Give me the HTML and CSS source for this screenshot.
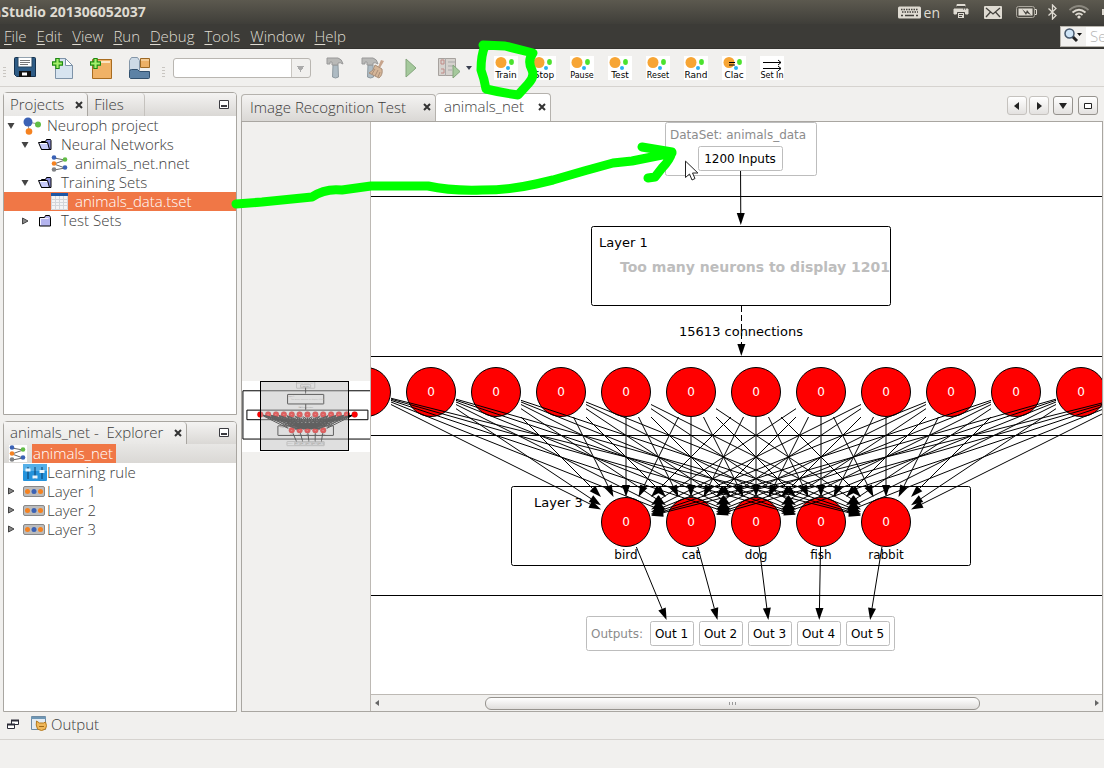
FILE: index.html
```html
<!DOCTYPE html>
<html lang="en">
<head>
<meta charset="utf-8">
<title>Neuroph Studio 201306052037</title>
<link rel="stylesheet" href="styles.css">
</head>
<body>
<svg class="defs" width="0" height="0" aria-hidden="true">
  <defs>
    <symbol id="i-min" viewBox="0 0 10 10"><path d="M0.5 0.500h9v8h-9z" fill="#fff" stroke="#3b3b40"/><path d="M2 5h6v2H2z" fill="#3b3b40"/></symbol>
    <symbol id="i-close" viewBox="0 0 8 8"><path d="M1 1l6 6M7 1L1 7" stroke="#333" stroke-width="2"/></symbol>
    <symbol id="i-open" viewBox="0 0 8 8"><path d="M0.500 1h7L4 7z" fill="#444"/></symbol>
    <symbol id="i-shut" viewBox="0 0 8 8"><path d="M1.500 1L7 4 1.500 7z" fill="#888" stroke="#444"/></symbol>
    <symbol id="i-folder-open" viewBox="0 0 16 14"><path d="M4.500 11.500V3.500h4l1-2h4l0.500 1v9z" fill="#8c90dc" stroke="#000"/><path d="M1.500 4.500h9l2 7h-8z" fill="#c8ccfa" stroke="#000"/><path d="M3 5.500h7" stroke="#fff"/></symbol>
    <symbol id="i-folder" viewBox="0 0 16 14"><path d="M2.500 12V3.500h5l1-2h4l1 2V12z" fill="#b4b4ee" stroke="#000"/><path d="M3.500 11V4.500h8" fill="none" stroke="#f2f2ff"/></symbol>
    <symbol id="i-net" viewBox="0 0 17 17"><path d="M3 3l11 2L3 9l11 4-11 2" fill="none" stroke="#666"/><circle cx="3" cy="2.500" r="2.300" fill="#3b62b5"/><circle cx="3" cy="8.500" r="2.300" fill="#f58220"/><circle cx="3" cy="14.500" r="2.300" fill="#808285"/><circle cx="14" cy="4.500" r="2.300" fill="#62bd46"/><circle cx="14" cy="12.500" r="2.300" fill="#3b62b5"/></symbol>
    <symbol id="i-layer" viewBox="0 0 22 11"><rect x="0.500" y="0.500" width="21" height="10" rx="1.500" fill="#bcbcbc" stroke="#888"/><circle cx="4.500" cy="5.500" r="2.500" fill="#f58220"/><circle cx="11" cy="5.500" r="2.500" fill="#3b62b5"/><circle cx="17.500" cy="5.500" r="2.500" fill="#f58220"/></symbol>
    <symbol id="i-dots" viewBox="0 0 24 24"><path d="M0 0h24v24H0z" fill="#fff"/><circle cx="7" cy="6.500" r="5.500" fill="#f7a534"/><ellipse cx="17.500" cy="6" rx="2.400" ry="3" fill="#4be22e"/><circle cx="14" cy="12" r="2" fill="#2bb0f2"/></symbol>
    <symbol id="i-plus" viewBox="0 0 10 10"><path d="M3.500 0.500h3v3h3v3h-3v3h-3v-3h-3v-3h3z" fill="#a6f06c" stroke="#1c8a10"/></symbol>
    <symbol id="i-hammer" viewBox="0 0 18 22"><path d="M7 8h5l0.500 12q-3 2-6 0z" fill="#aebbc3" stroke="#8f9aa0"/><path d="M1 1h11q4 1 5 6-3-2-5-1v2H6V5H4v2H1z" fill="#b9b9b7" stroke="#999"/></symbol>
  </defs>
</svg>
<div class="app">
  <header class="titlebar">
    <h1 class="title">nStudio 201306052037</h1>
    <div class="tray">
      <svg width="23" height="13" viewBox="0 0 23 13"><rect width="23" height="12" y="0.500" rx="1.500" fill="#dfdbd2"/><path d="M3 3.500h17M4 6h16" stroke="#45433e" stroke-width="1.500" stroke-dasharray="1.500 1"/><path d="M3 9.500h2M7 9.500h9M18 9.500h2" stroke="#45433e" stroke-width="1.500"/></svg>
      <span class="lang">en</span>
      <svg class="printer" width="16" height="16" viewBox="0 0 16 16"><path d="M4 3V0.500h8V3M1 5h14v5h-2.500V8h-9v2H1z" fill="#dfdbd2" stroke="#dfdbd2"/><path d="M3.500 2.500h9M10 5h1M12 5h1" stroke="#45433e"/><path d="M4.500 8.500h7v6h-7z" fill="#dfdbd2" stroke="#45433e"/><path d="M6 10.500h4M6 12.500h3" stroke="#45433e"/></svg>
      <svg class="mail" width="18" height="13" viewBox="0 0 18 13"><rect width="18" height="13" rx="1" fill="#dfdbd2"/><path d="M2 2l7 6 7-6M2 11l4.500-5M16 11l-4.500-5" fill="none" stroke="#45433e" stroke-width="1.300"/></svg>
      <svg class="battery" width="21" height="12" viewBox="0 0 21 12"><rect x="0.500" y="0.500" width="18" height="11" rx="2" fill="none" stroke="#aaa69d"/><path d="M2.500 2.500h14v7h-14z" fill="#dfdbd2"/><path d="M19 3.500h1.500v5H19" fill="none" stroke="#dfdbd2"/><path d="M6 3l4 3.500L11 4l4 5-4-2-1 2z" fill="#45433e"/></svg>
      <svg class="bt" width="9" height="16" viewBox="0 0 9 16"><path d="M0.500 4.500l7.500 7L4.500 15V1L8 4.500l-7.500 7" fill="none" stroke="#dfdbd2" stroke-width="1.300"/></svg>
      <svg class="wifi" width="20" height="14" viewBox="0 0 20 14"><path d="M0.500 5q9.500-8 19 0" fill="none" stroke="#8b887f" stroke-width="1.700"/><path d="M3.500 7.500q6.500-5.500 13 0M6.500 10q3.500-3 7 0" fill="none" stroke="#dfdbd2" stroke-width="1.800"/><circle cx="10" cy="12" r="1.600" fill="#dfdbd2"/></svg>
      <svg width="3" height="8" viewBox="0 0 3 8"><path d="M3 1H1v6h2z" fill="#dfdbd2"/></svg>
    </div>
  </header>
  <nav class="menubar">
    <button><u>F</u>ile</button><button><u>E</u>dit</button><button><u>V</u>iew</button><button><u>R</u>un</button><button><u>D</u>ebug</button><button><u>T</u>ools</button><button><u>W</u>indow</button><button><u>H</u>elp</button>
    <label class="search">
      <svg width="19" height="16" viewBox="0 0 19 16"><path d="M8 8l5 5" stroke="#222" stroke-width="3"/><circle cx="5.500" cy="5.500" r="4.500" fill="#cfe4f6" stroke="#44566b" stroke-width="1.500"/><path d="M13 5h5l-2.500 3z" fill="#111"/></svg>
      <input type="text" placeholder="Search" aria-label="Search">
    </label>
  </nav>
  <div class="toolbar">
    <span class="grip"></span>
    <button class="tool" aria-label="Save All"><svg width="22" height="21" viewBox="0 0 22 21"><path d="M1.500 0.500h19q1 0 1 1v18h-19l-2-2v-16q0-1 1-1z" fill="#2e5c86" stroke="#16314d"/><path d="M4 0h14v10H4z" fill="#fff" stroke="#27445f"/><path d="M6 3.500h10M6 5.500h10M6 7.500h8" stroke="#777"/><path d="M5 14h12v6H5z" fill="#111"/><path d="M8 15.500h5v3H8z" fill="#fff"/></svg></button>
    <button class="tool" aria-label="New File"><svg width="22" height="22" viewBox="0 0 22 22"><path d="M3.500 1.500h10l7 7v13h-17z" fill="#d7e4f0" stroke="#7e93a8"/><path d="M13.500 1.500v7h7z" fill="#fff" stroke="#7e93a8"/><use href="#i-plus" x="0" y="1" width="11" height="11"/></svg></button>
    <button class="tool" aria-label="New Project"><svg width="22" height="22" viewBox="0 0 22 22"><path d="M2.500 2.500h19v19h-19z" fill="#f0b266" stroke="#a86c20"/><path d="M4 4h16v2H4z" fill="#fbe4c0"/><use href="#i-plus" x="0" y="1" width="11" height="11"/></svg></button>
    <button class="tool" aria-label="Open Project"><svg width="23" height="22" viewBox="0 0 23 22"><path d="M1.500 19V3.500l2-3h6l2 3v10z" fill="#cddae6" stroke="#8496a8"/><path d="M12.500 1.500h9v9h-9z" fill="#ecb066" stroke="#9c6824"/><path d="M13 3h8" stroke="#fbe4c0"/><path d="M1.500 20.500v-6q0-2 2-2h6l2 2h10v6q0 1-1 1h-18z" fill="#5d82a5" stroke="#31506e"/></svg></button>
    <span class="grip"></span>
    <select class="config" aria-label="Configuration"><option></option></select>
    <button class="tool" aria-label="Build"><svg width="18" height="22"><use href="#i-hammer"/></svg></button>
    <button class="tool" aria-label="Clean and Build"><svg width="24" height="22" viewBox="0 0 24 22"><use href="#i-hammer" width="18" height="22"/><path d="M20 3l3 1-4 7-2-1z" fill="#c7a48c"/><path d="M14 8l7 4q1 6-3 9l-10-5q5-2 6-8z" fill="#d5b597" stroke="#a98f79"/><path d="M14 12l-3 5M17 13l-3 6M19 15l-2 5" stroke="#a98f79"/></svg></button>
    <button class="tool" aria-label="Run"><svg width="12" height="20" viewBox="0 0 12 20"><path d="M1 1l10 9L1 19z" fill="#a5c99c" stroke="#84a67d"/></svg></button>
    <button class="tool" aria-label="Debug"><svg width="23" height="22" viewBox="0 0 23 22"><path d="M0.500 1.500h17v17h-17z" fill="#d6d2ce" stroke="#a7a29e"/><path d="M7.500 1v18M10 5h7M10 9h5M10 13h4" stroke="#aaa"/><path d="M3 3h3v4H3zM3 12h3v4H3" fill="none" stroke="#c08a86"/><path d="M15 8l7 6.500-7 6.500z" fill="#a5c99c" stroke="#84a67d"/></svg></button>
    <svg class="drop" width="6" height="4" viewBox="0 0 6 4"><path d="M0 0h6L3 4z" fill="#3a3f50"/></svg>
    <span class="grip"></span>
    <button class="tool net"><svg width="24" height="15" viewBox="0 0 24 15"><use href="#i-dots" width="24" height="24"/></svg><span>Train</span></button>
    <button class="tool net"><svg width="24" height="15" viewBox="0 0 24 15"><use href="#i-dots" width="24" height="24"/></svg><span>Stop</span></button>
    <button class="tool net long"><svg width="24" height="15" viewBox="0 0 24 15"><use href="#i-dots" width="24" height="24"/></svg><span>Pause</span></button>
    <button class="tool net"><svg width="24" height="15" viewBox="0 0 24 15"><use href="#i-dots" width="24" height="24"/></svg><span>Test</span></button>
    <button class="tool net long"><svg width="24" height="15" viewBox="0 0 24 15"><use href="#i-dots" width="24" height="24"/></svg><span>Reset</span></button>
    <button class="tool net"><svg width="24" height="15" viewBox="0 0 24 15"><use href="#i-dots" width="24" height="24"/></svg><span>Rand</span></button>
    <button class="tool net"><svg width="24" height="15" viewBox="0 0 24 15"><use href="#i-dots" width="24" height="24"/><path d="M7 6.500h6M7 9h6" stroke="#000"/></svg><span>Clac</span></button>
    <button class="tool net long"><svg width="24" height="15" viewBox="0 0 24 15"><path d="M0 0h24v15H0z" fill="#fff"/><path d="M3 6.500h18M3 12.500h18M18 4l3 2.500L18 9M18 10l3 2.500-3 2.500" fill="none" stroke="#000"/></svg><span>Set In</span></button>
  </div>

  <main class="work">
    <aside class="side">
      <section class="panel projects">
        <div class="tabs">
          <button class="tab on">Projects <svg width="8" height="8"><use href="#i-close"/></svg></button><button class="tab files">Files</button>
          <button class="mini" aria-label="Minimize"><svg width="10" height="10"><use href="#i-min"/></svg></button>
        </div>
        <ul class="tree">
          <li class="row"><svg class="tw" width="8" height="8"><use href="#i-open"/></svg><svg class="ic" width="19" height="18" viewBox="0 0 19 18"><path d="M5 5l10 2M5 5l1 10" stroke="#999"/><circle cx="5" cy="5" r="4.500" fill="#3b62b5"/><circle cx="15" cy="7.500" r="3" fill="#62bd46"/><circle cx="6" cy="14.500" r="3.300" fill="#f58220"/></svg><span>Neuroph project</span></li>
          <li class="row d1"><svg class="tw" width="8" height="8"><use href="#i-open"/></svg><svg class="ic" width="16" height="14"><use href="#i-folder-open"/></svg><span>Neural Networks</span></li>
          <li class="row d2"><svg class="ic" width="17" height="17"><use href="#i-net"/></svg><span>animals_net.nnet</span></li>
          <li class="row d1"><svg class="tw" width="8" height="8"><use href="#i-open"/></svg><svg class="ic" width="16" height="14"><use href="#i-folder-open"/></svg><span>Training Sets</span></li>
          <li class="row d2 sel"><svg class="ic" width="17" height="17" viewBox="0 0 17 17"><path d="M0 0h17v17H0z" fill="#f4f4f4"/><path d="M0 6.500h17M0 9.500h17M0 12.500h17M4.500 3v14M8.500 3v14M12.500 3v14M0.500 3v13.500h16V3" fill="none" stroke="#d3d6da"/><path d="M0 0h17v3H0z" fill="#1d57a5"/></svg><span>animals_data.tset</span></li>
          <li class="row d1"><svg class="tw" width="8" height="8"><use href="#i-shut"/></svg><svg class="ic" width="16" height="14"><use href="#i-folder"/></svg><span>Test Sets</span></li>
        </ul>
      </section>
      <section class="panel explorer">
        <div class="tabs">
          <button class="tab on">animals_net - &nbsp;Explorer <svg width="8" height="8"><use href="#i-close"/></svg></button>
          <button class="mini" aria-label="Minimize"><svg width="10" height="10"><use href="#i-min"/></svg></button>
        </div>
        <ul class="tree">
          <li class="row root"><svg class="ic" width="18" height="17" viewBox="0 0 18 17"><path d="M0 0h18v17H0z" fill="#fff"/><use href="#i-net" width="17" height="17"/></svg><span class="mark">animals_net</span></li>
          <li class="row e1"><svg class="ic wide" width="24" height="17" viewBox="0 0 24 17"><rect width="24" height="17" rx="1" fill="#2493dc"/><path d="M0 0h24v7H0z" fill="#55b0e8"/><path d="M5 3v12M12 3v12M19 3v12" stroke="#0b3a66"/><path d="M2.500 6h5M9.500 13h5M16.500 7.500h5" stroke="#e8f4fc" stroke-width="3"/></svg><span>Learning rule</span></li>
          <li class="row e1"><svg class="tw" width="8" height="8"><use href="#i-shut"/></svg><svg class="ic wide" width="22" height="11"><use href="#i-layer"/></svg><span>Layer 1</span></li>
          <li class="row e1"><svg class="tw" width="8" height="8"><use href="#i-shut"/></svg><svg class="ic wide" width="22" height="11"><use href="#i-layer"/></svg><span>Layer 2</span></li>
          <li class="row e1"><svg class="tw" width="8" height="8"><use href="#i-shut"/></svg><svg class="ic wide" width="22" height="11"><use href="#i-layer"/></svg><span>Layer 3</span></li>
        </ul>
      </section>
    </aside>

    <section class="editor">
      <div class="etabs">
        <button class="etab first">Image Recognition Test <svg width="8" height="8"><use href="#i-close"/></svg></button><button class="etab on">animals_net <svg width="8" height="8"><use href="#i-close"/></svg></button>
        <div class="nav">
          <button class="soft" aria-label="Previous"><svg width="8" height="8" viewBox="0 0 8 8"><path d="M6 0v8L1 4z" fill="#222"/></svg></button>
          <button class="soft" aria-label="Next"><svg width="8" height="8" viewBox="0 0 8 8"><path d="M2 0v8l5-4z" fill="#222"/></svg></button>
          <button class="list" aria-label="Show list"><svg width="8" height="8" viewBox="0 0 8 8"><path d="M0 1h8L4 7z" fill="#222"/></svg></button>
          <button class="maxi" aria-label="Maximize"><svg width="8" height="8" viewBox="0 0 8 8"><path d="M0.500 1.500h7v5h-7z" fill="#fff" stroke="#222"/></svg></button>
        </div>
      </div>
      <div class="body">
        <div class="overview">
          <svg class="thumb" width="128" height="71">
            <rect width="128" height="71" fill="#fff"/>
            <g transform="translate(-26 -14) scale(0.121)"><use href="#scene"/></g>
            <rect x="18.500" y="0.500" width="88" height="69" fill="#c0c0c0" fill-opacity="0.500" stroke="#000"/>
          </svg>
        </div>
        <div class="view">
          <svg class="canvas" role="img" aria-label="Network graph">
            <defs><clipPath id="clip1"><rect x="591" y="226" width="300" height="80"/></clipPath></defs>
            <g transform="translate(-371 -122)">
              <g id="scene">
                <rect class="box" x="222.500" y="196.500" width="1080" height="399"/>
                <rect class="box" x="255.500" y="356.500" width="1000" height="79"/>
                <rect class="box soft" x="665.500" y="122.500" width="151" height="53" rx="2"/>
                <text class="dim" x="670" y="139">DataSet: animals_data</text>
                <rect class="box soft" x="698.500" y="146.500" width="84" height="24" rx="2"/>
                <text class="lbl" x="740" y="163" text-anchor="middle">1200 Inputs</text>
                <rect class="box" x="591.500" y="226.500" width="299" height="79" rx="2"/>
                <text class="name" x="599" y="247">Layer 1</text>
                <text class="many" x="620" y="272" clip-path="url(#clip1)">Too many neurons to display 1201</text>
                <rect class="box" x="511.500" y="486.500" width="459" height="79" rx="2"/>
                <text class="name" x="534" y="507">Layer 3</text>
                <rect class="box soft" x="586.500" y="616.500" width="308" height="34" rx="2"/>
                <text class="dim" x="591" y="638">Outputs:</text>
                <g id="neurons"></g>
                <g id="edges"></g>
                <path class="edge" d="M741.500 306v46" stroke-dasharray="6 3"/>
                <text class="name" x="741" y="336" text-anchor="middle">15613 connections</text>
              </g>
            </g>
          </svg>
          <div class="hbar">
            <button aria-label="Scroll left"><svg width="5" height="6" viewBox="0 0 5 6"><path d="M4 0v6L0 3z" fill="#666"/></svg></button>
            <div class="track"><div class="handle"><i></i><i></i><i></i></div></div>
            <button aria-label="Scroll right"><svg width="5" height="6" viewBox="0 0 5 6"><path d="M1 0v6l4-3z" fill="#666"/></svg></button>
          </div>
        </div>
      </div>
    </section>
  </main>

  <div class="dock">
    <button class="dbtn" aria-label="Restore"><svg width="12" height="11" viewBox="0 0 12 11"><path d="M4.500 1.500h7v4h-7z" fill="#fff" stroke="#2c2c38"/><path d="M4 1.500h8" stroke="#2c2c38" stroke-width="2"/><path d="M0.500 5.500h7v4h-7z" fill="#fff" stroke="#2c2c38"/><path d="M0 5.500h8" stroke="#2c2c38" stroke-width="2"/></svg></button>
    <button class="dbtn"><svg width="16" height="16" viewBox="0 0 16 16"><path d="M0.500 0.500h14v13h-14z" fill="#e3ebf2" stroke="#6f8ba3"/><path d="M0 1h15v2H0z" fill="#6f97b5"/><path d="M5.500 5l3 2h4l2-1q2 4 0 7-4 3-8 0-2-4-1-8z" fill="#f0b85a" stroke="#b47a1e"/><path d="M8 10.500h5" stroke="#a06a18"/></svg><span>Output</span></button>
  </div>
  <footer class="status"></footer>

  <svg class="marks" aria-hidden="true">
    <path d="M483 45L505 46 533 53Q527 61 532 70 535 77 528 84L518 95Q503 93 486 89 484 78 481 70 481 55 485 46" />
    <path d="M236 204L262 202 312 197Q325 188 342 190L371 186 428 186Q450 191 482 190 510 190 536 184L553 180 584 171 613 163 632 161 672 153M642 147L672 152Q670 160 662 168L655 177 648 178"/>
    <path class="pointer" d="M685.500 161.500v16l4-3.500 2.500 6 3-1.500-2.500-5.500h5z"/>
  </svg>
</div>
<script src="graph.js"></script>
</body>
</html>
```
FILE: styles.css
```css
* { box-sizing: border-box; }
html, body { height: 100%; }
body {
  margin: 0;
  padding-bottom: 16px;
  background: #fff;
  color: #3c3c3c;
  font: 300 15px/19px "Open Sans", "Noto Sans", sans-serif;
  overflow: hidden;
}
button {
  font: inherit;
  color: inherit;
  background: none;
  border: 0;
  padding: 0;
  margin: 0;
}
svg { display: block; flex: none; }
.defs { position: absolute; }
.app {
  position: relative;
  display: flex;
  flex-direction: column;
  height: 100%;
  background: #f1f0ee;
  overflow: hidden;
}
.titlebar {
  display: flex;
  align-items: center;
  justify-content: space-between;
  height: 24px;
  flex: none;
  background: linear-gradient(#5c594f, #3f3e39);
  color: #dfdbd2;
  overflow: hidden;
}
.title {
  margin: 0 0 0 -8px;
  font: 700 14px/24px "Open Sans", sans-serif;
}
.tray { display: flex; align-items: center; }
.lang { margin: 0 13px 0 3px; font-size: 14px; font-weight: 400; }
.printer { margin-right: 15px; }
.mail { margin-right: 14px; }
.battery { margin-right: 11px; }
.bt { margin-right: 12px; }
.wifi { margin-right: 12px; }
.menubar {
  display: flex;
  align-items: center;
  flex: none;
  height: 25px;
  background: #3c3b37;
  color: #dfdbd2;
  border-bottom: 1px solid #33322f;
}
.menubar button { padding: 0 5px; }
.menubar button:first-child { padding-left: 4px; }
.menubar u { text-underline-offset: 2px; }
.search {
  display: flex;
  align-items: center;
  margin-left: auto;
  width: 44px;
  height: 21px;
  padding-left: 3px;
  background: #f1f0ee;
  border: 1px solid #b8b5ae;
  border-right: 0;
  overflow: hidden;
}
.search input {
  flex: 1;
  min-width: 0;
  height: 19px;
  margin-left: 3px;
  padding: 0 0 0 4px;
  border: 0;
  background: #fff;
  font: inherit;
}
.search input::placeholder { color: #b4b4b4; }
.toolbar {
  display: flex;
  align-items: center;
  flex: none;
  height: 38px;
  border-bottom: 1px solid #d6d3cf;
}
.tool {
  display: flex;
  align-items: center;
  justify-content: center;
  width: 38px;
  height: 36px;
  flex: none;
}
.grip {
  width: 3px;
  height: 10px;
  margin: 8px 0 0 3px;
  flex: none;
  background: repeating-linear-gradient(#c9c6c1 0 1px, transparent 1px 3px);
}
.config {
  appearance: none;
  width: 138px;
  height: 20px;
  margin: 0 5px 0 7px;
  border: 1px solid #b9b6b1;
  border-radius: 3px;
  background:
    linear-gradient(#c9c6c1, #c9c6c1) right 18px top 0 / 1px 100% no-repeat,
    conic-gradient(from -32deg at 50% 100%, transparent 0) no-repeat,
    linear-gradient(90deg, #fff 117px, #f1f0ee 0);
  background:
    linear-gradient(#c9c6c1, #c9c6c1) right 18px top 0 / 1px 100% no-repeat,
    conic-gradient(from -32deg at 50% 100%, #aaa 64deg, transparent 0) right 5px top 7px / 9px 6px no-repeat,
    linear-gradient(90deg, #fff 117px, #f1f0ee 0);
}
.tool + .grip { margin-left: 4px; margin-right: 1px; }
.drop { margin-left: -2px; }
.drop + .grip { margin-left: 8px; margin-right: 4px; }
.net {
  flex-direction: column;
  color: #000;
  font: 400 9px/9px "DejaVu Sans", sans-serif;
}
.net span { width: 24px; background: #fff; text-align: center; white-space: nowrap; }
.long { font-size: 8px; }
.work {
  display: flex;
  flex: 1;
  min-height: 0;
  gap: 4px;
  padding: 5px 1px 0 3px;
}
.side {
  display: flex;
  flex-direction: column;
  gap: 6px;
  flex: 0 0 234px;
}
.panel {
  display: flex;
  flex-direction: column;
  border: 1px solid #a9a6a1;
  border-radius: 4px 4px 0 0;
  background: #fff;
}
.projects { flex: 323 1 0; }
.explorer { flex: 291 1 0; }
.tabs {
  display: flex;
  height: 23px;
  flex: none;
  background: linear-gradient(#f4f3f2, #dad8d5);
  border-radius: 3px 3px 0 0;
}
.explorer .tabs { height: 22px; }
.tab {
  display: flex;
  align-items: center;
  gap: 11px;
  padding: 0 4px 0 6px;
  border-right: 1px solid #a9a6a1;
  border-radius: 0 4px 0 0;
  white-space: nowrap;
}
.files { padding-right: 20px; border-color: #c5c2be; }
.tab.on { background: linear-gradient(#f6f5f4, #e9e8e6); }
.mini { margin: 0 7px 0 auto; }
.tree { list-style: none; margin: 0; padding: 0; }
.row {
  display: flex;
  align-items: center;
  height: 19px;
  padding-left: 19px;
  white-space: nowrap;
}
.tw { margin: 0 8px 0 -16px; }
.row .ic { margin-right: 5px; }
.d1 { padding-left: 33px; }
.d1 .ic { margin-right: 8px; }
.d2 { padding-left: 47px; }
.d2 .ic { margin-right: 7px; }
.sel { background: #f07746; color: #fff; }
.root { padding-left: 5px; background: linear-gradient(#e8e7e5, #dad8d5); }
.mark { padding: 0 3px 0 1px; background: #f07746; color: #fff; }
.row.e1 { padding-left: 19px; }
.row .wide { margin-right: 0; }
.row .tw + .wide { margin-right: 2px; }
.editor { display: flex; flex-direction: column; flex: 1; min-width: 0; }
.etabs { display: flex; height: 29px; flex: none; }
.etab {
  display: flex;
  align-items: center;
  justify-content: space-between;
  min-width: 115px;
  padding: 0 4px 2px 8px;
  margin-top: 2px;
  border: 1px solid #b5b2ad;
  border-bottom: 0;
  border-radius: 4px 4px 0 0;
  background: linear-gradient(#f4f3f2, #dad8d5);
  white-space: nowrap;
}
.etab.first { min-width: 195px; }
.etab.on { margin-top: 1px; background: #fff; border-left: 0; }
.nav { display: flex; gap: 2px; margin: 4px 5px 0 auto; }
.nav button {
  display: flex;
  align-items: center;
  justify-content: center;
  width: 20px;
  height: 19px;
  border: 1px solid #96938e;
  border-radius: 3px;
  background: linear-gradient(#fff, #e3e1df);
}
.nav .soft { border-color: #c5c2be; }
.nav .list { margin-left: 2px; }
.nav .maxi { margin-left: 3px; }
.body {
  display: flex;
  flex: 1;
  min-height: 0;
  border: 1px solid #a9a6a1;
}
.overview {
  display: flex;
  align-items: center;
  width: 128px;
  flex: none;
}
.view {
  display: flex;
  flex-direction: column;
  flex: 1;
  min-width: 0;
  border-left: 1px solid #bdb9b4;
}
.canvas {
  width: 100%;
  flex: 1;
  min-height: 0;
  background: #fff;
  border-bottom: 1px solid #bdb9b4;
  overflow: hidden;
}
.thumb { margin-bottom: 1px; }
.hbar { display: flex; align-items: center; height: 16px; flex: none; }
.hbar > button { display: flex; justify-content: center; width: 12px; }
.track { flex: 1; padding: 0 15% 0 14%; }
.handle {
  display: flex;
  align-items: center;
  justify-content: center;
  gap: 2px;
  height: 13px;
  border: 1px solid #96938e;
  border-radius: 6px;
  background: linear-gradient(#fff, #e0dedc);
}
.handle i { width: 1px; height: 3px; background: #999; }
.dock {
  display: flex;
  align-items: center;
  gap: 12px;
  flex: none;
  height: 28px;
  padding: 0 7px 3px;
  border-bottom: 1px solid #d6d3cf;
}
.dbtn { display: flex; align-items: center; gap: 4px; }
.status { flex: none; height: 28px; }
.marks {
  position: absolute;
  inset: 0;
  width: 100%;
  height: 100%;
  pointer-events: none;
  fill: none;
  stroke: #00ff00;
  stroke-width: 9px;
  stroke-linecap: round;
  stroke-linejoin: round;
}
.pointer { fill: #fff; stroke: #222; stroke-width: 1px; }

.box { fill: none; stroke: #000; vector-effect: non-scaling-stroke; }
.box.soft { stroke: #bdbdbd; }
.edge { fill: none; stroke: #000; vector-effect: non-scaling-stroke; }
.neuron { fill: #f00; stroke: #000; }
.canvas text { font-family: "DejaVu Sans", sans-serif; font-weight: 400; font-size: 12px; fill: #000; }
.canvas .name { font-size: 13px; }
.canvas .dim { fill: #8c8c8c; }
.canvas .many { font-size: 14px; font-weight: 700; fill: #bdbdbd; }
.canvas .value { fill: #fff; }
```
FILE: graph.js
```js
const NS = "http://www.w3.org/2000/svg";
const neurons = document.getElementById("neurons");
const edges = document.getElementById("edges");

function add(parent, tag, attrs, text) {
  const el = document.createElementNS(NS, tag);
  for (const key in attrs) el.setAttribute(key, attrs[key]);
  if (text) el.textContent = text;
  parent.appendChild(el);
}

// Point where the ray from a box centre towards another point leaves the box.
function anchor(box, to) {
  const dx = to.x - box.x;
  const dy = to.y - box.y;
  const k = Math.min(box.w / Math.abs(dx || 0.001), box.h / Math.abs(dy || 0.001));
  return { x: box.x + dx * k, y: box.y + dy * k };
}

function connect(from, to) {
  const a = anchor(from, to);
  const b = anchor(to, from);
  const len = Math.hypot(b.x - a.x, b.y - a.y);
  const ux = (b.x - a.x) / len;
  const uy = (b.y - a.y) / len;
  const cx = b.x - ux * 12;
  const cy = b.y - uy * 12;
  add(edges, "path", { class: "edge", d: `M${a.x} ${a.y}L${cx} ${cy}` });
  add(edges, "path", { d: `M${b.x} ${b.y}L${cx - uy * 4} ${cy + ux * 4}L${cx + uy * 4} ${cy - ux * 4}z` });
}

function neuron(x, y, value, label) {
  add(neurons, "circle", { class: "neuron", cx: x, cy: y, r: 24.5 });
  if (value) add(neurons, "text", { class: "value", x, y: y + 4, "text-anchor": "middle" }, value);
  if (label) add(neurons, "text", { x, y: y + 37, "text-anchor": "middle" }, label);
  return { x, y, w: 25, h: 25 };
}

const hidden = Array.from({ length: 13 }, (_, i) => neuron(366 + i * 65, 392, i > 0 && i < 12 ? "0" : ""));
const output = ["bird", "cat", "dog", "fish", "rabbit"].map((name, i) => neuron(626 + i * 65, 522, "0", name));

hidden.forEach(h => output.forEach(o => connect(h, o)));
output.forEach((o, i) => {
  const x = 672 + i * 49;
  add(neurons, "rect", { class: "box soft", x: x - 21.5, y: 621.5, width: 43, height: 24, rx: 2 });
  add(neurons, "text", { x: x - 0.5, y: 638, "text-anchor": "middle" }, `Out ${i + 1}`);
  connect(o, { x, y: 633, w: 22, h: 13 });
});
connect({ x: 740.5, y: 158, w: 42, h: 13 }, { x: 741, y: 266, w: 150, h: 41 });
connect({ x: 741.5, y: 330, w: 42, h: 13 }, { x: 741, y: 396, w: 150, h: 40 });
```
